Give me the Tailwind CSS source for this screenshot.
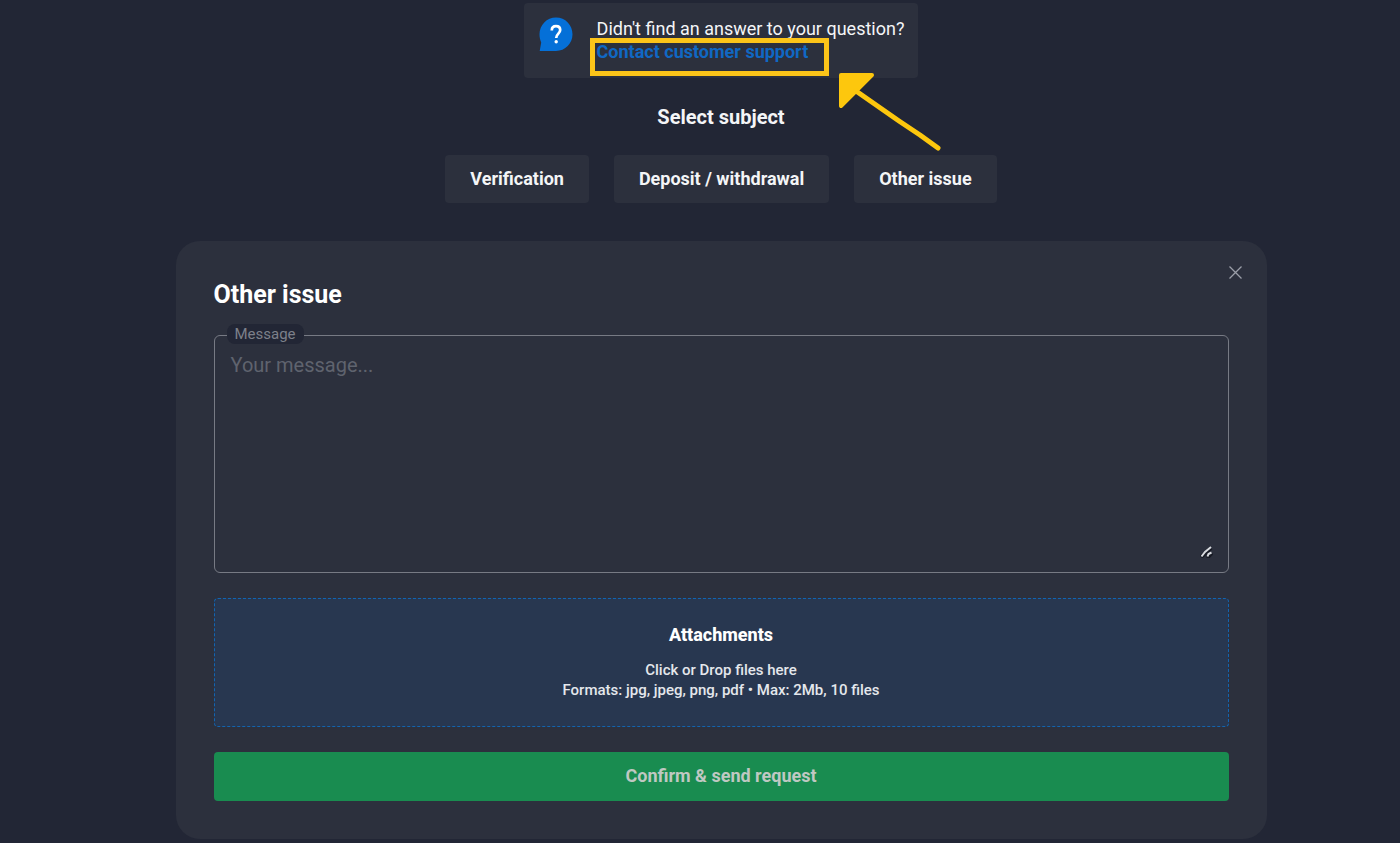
<!DOCTYPE html>
<html lang="en">

<head>
    <meta charset="UTF-8">
    <meta name="viewport" content="width=device-width, initial-scale=1.0">
    <title>Customer support</title>
    <script src="https://cdn.jsdelivr.net/npm/@tailwindcss/browser@4"></script>
</head>

<body class="bg-[#222635] font-['Roboto',sans-serif] text-[#f4f5f7] min-h-screen">
    <main class="flex flex-col items-center pt-[3px] pb-1 pl-[42px]">

        <!-- Contact card -->
        <section class="relative flex items-start gap-6 rounded bg-[#2c303d] h-[75px] pl-[15px] pr-[14px] pt-[14px]">
            <svg class="w-[34px] h-[35px] shrink-0" viewBox="0 0 34 35" fill="none" aria-hidden="true">
                <path d="M17 0.5C26.4 0.5 33.5 8 33.5 17.3C33.5 26.6 26.2 34 17 34H0.7L2.2 25.5C1.1 23 0.5 20.2 0.5 17.3C0.5 8 7.8 0.5 17 0.5Z" fill="#0570d8" />
                <path d="M12.8 13.4C12.8 10.8 14.5 9.2 17 9.2C19.5 9.2 21.2 10.8 21.2 13.1C21.2 16.5 17.2 16.8 17.2 21" stroke="#fff" stroke-width="2.7" />
                <circle cx="17.2" cy="24.8" r="1.7" fill="#fff" />
            </svg>
            <div>
                <p class="text-lg leading-6">Didn't find an answer to your question?</p>
                <a href="#support" class="relative block w-fit text-lg leading-[22px] font-bold text-[#1068c4]">
                    Contact customer support
                    <span class="absolute -left-[7px] -top-[3px] -right-[21px] h-[38px] border-5 border-[#fcc419]"></span>
                </a>
            </div>
            <!-- Pointer arrow -->
            <svg class="absolute left-[314px] top-[69px] w-[104px] h-[80px]" viewBox="0 0 104 80" fill="none" aria-hidden="true">
                <path d="M3 3H34L3 34Z" fill="#fdc70d" stroke="#fdc70d" stroke-width="4" stroke-linejoin="round" />
                <path d="M18 19L61 49L82 63L100 76" stroke="#fdc70d" stroke-width="5" stroke-linecap="round" stroke-linejoin="round" />
            </svg>
        </section>

        <h2 class="mt-[25px] text-xl leading-7 font-bold">Select subject</h2>

        <div class="mt-6 flex flex-wrap justify-center gap-[25px] text-lg font-bold">
            <button type="button" class="h-12 rounded bg-[#2c303d] px-[25px]">Verification</button>
            <button type="button" class="h-12 rounded bg-[#2c303d] px-[25px]">Deposit / withdrawal</button>
            <button type="button" class="h-12 rounded bg-[#2c303d] px-[25px]">Other issue</button>
        </div>

        <!-- Request form -->
        <form class="relative mt-[38px] w-full max-w-[1091px] rounded-3xl bg-[#2c303d] px-[38px] py-[38px]">
            <button type="button" aria-label="Close" class="absolute right-[25px] top-[25px]">
                <svg class="w-[13px] h-[13px]" viewBox="0 0 13 13" fill="none" stroke="#9b9ea8" stroke-width="1.3" aria-hidden="true">
                    <path d="M0.5 0.5L12.5 12.5M12.5 0.5L0.5 12.5" />
                </svg>
            </button>

            <h1 class="text-[25px] leading-8 font-bold text-white">Other issue</h1>

            <div class="relative mt-6">
                <label for="message" class="absolute left-[13px] -top-[11px] rounded-lg bg-[#222635] px-2 text-[15px] leading-5 text-[#7d808a]">Message</label>
                <textarea id="message" placeholder="Your message..." class="block w-full h-[238px] resize-none rounded-md border border-[#777a84] bg-transparent px-4 py-[15px] text-xl leading-7 outline-none placeholder:text-[#5f636e]"></textarea>
                <svg class="absolute right-[16px] bottom-[15px] w-[13px] h-[13px] pointer-events-none" viewBox="0 0 13 13" fill="none" aria-hidden="true">
                    <path d="M1 12L11 3M7 13L12 8" stroke="#171a24" stroke-width="4" />
                    <path d="M1.5 11.5L5 7L11 2M7.5 11.5L8.500 9L11.5 7.500" stroke="#d9dbe0" stroke-width="2" />
                </svg>
            </div>

            <label for="files" class="mt-[25px] flex h-[129px] flex-col items-center rounded border border-dashed border-[#1264b0] bg-[#283750] pt-6 text-center">
                <span class="text-lg leading-6 font-extrabold text-white">Attachments</span>
                <span class="mt-[13px] text-[15px] leading-5 font-medium text-[#e4e7ec]">Click or Drop files here<br>Formats: jpg, jpeg, png, pdf • Max: 2Mb, 10 files</span>
                <input id="files" type="file" multiple class="sr-only">
            </label>

            <button type="submit" class="mt-[25px] block h-[49px] w-full rounded bg-[#198c50] pb-0.5 text-lg font-bold text-[#bfc8c2]">Confirm &amp; send request</button>
        </form>
    </main>
</body>
</html>
